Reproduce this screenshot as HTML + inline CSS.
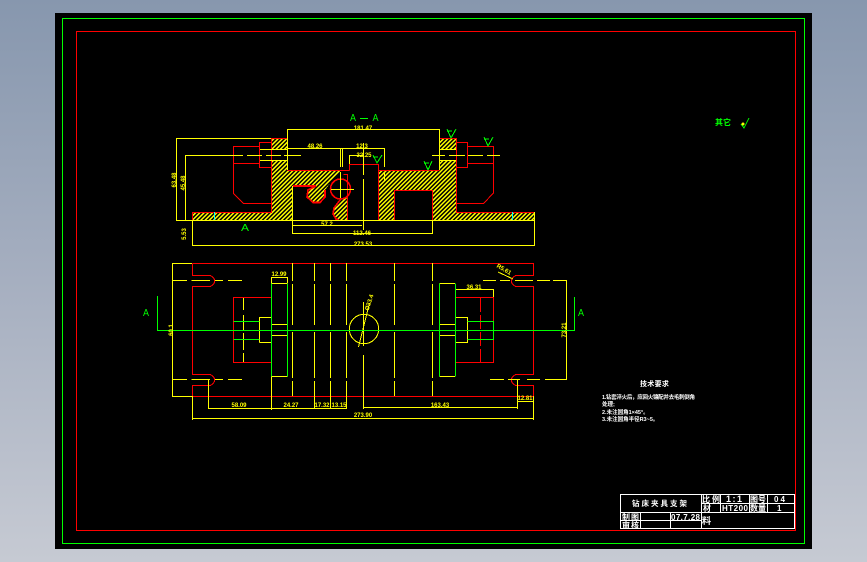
<!DOCTYPE html>
<html lang="zh">
<head>
<meta charset="utf-8">
<title>钻床夹具装配图</title>
<style>
html,body{margin:0;padding:0;width:867px;height:562px;overflow:hidden;background:linear-gradient(180deg,#8797ae 0%,#a6afc0 50%,#c6cad3 100%)}
svg{position:absolute;left:0;top:0;display:block}
text{font-family:"Liberation Sans","Noto Sans CJK SC",sans-serif}
.d{fill:#ff0;font-size:6px;font-weight:bold;text-anchor:middle}
.w{fill:#fff;font-size:7px;font-weight:bold}
.g{fill:#0f0;font-size:10px}
.c path,.c circle,.c rect,.c polygon{shape-rendering:crispEdges}
</style>
</head>
<body>
<svg width="867" height="562" viewBox="0 0 867 562" xmlns="http://www.w3.org/2000/svg">
<defs>
<pattern id="h" width="3" height="3" patternUnits="userSpaceOnUse" patternTransform="rotate(-45)">
<rect width="3" height="3" fill="#000"/><rect width="3" height="1.5" fill="#ff0"/>
</pattern>
</defs>
<rect x="55" y="13" width="757" height="536" fill="#000"/>
<g class="c">
<rect x="62.5" y="18.5" width="742" height="525" fill="none" stroke="#0f0"/>
<rect x="76.5" y="31.5" width="719" height="499" fill="none" stroke="#f00"/>

<!-- section view hatching -->
<g fill="url(#h)">
<polygon points="271,138 287,138 287,149 271,149"/>
<polygon points="271,160 287,160 287,170 342,170 331,182 325,190 325,197 320,202 313,202 307,197 308,190 316,186 292.5,186 292.5,220 192,220 192,212.5 271,212.5"/>
<polygon points="347,197 341,199 334,208 333,214 336,219 338,220 347,220"/>
<polygon points="378,170 439,170 439,160 456,160 456,212 534,212 534,220 432,220 432,190 394,190 394,220 378,220"/>
<polygon points="439,138 456,138 456,149 439,149"/>
</g>

<!-- section view red -->
<g fill="none" stroke="#f00" stroke-width="1">
<path d="M192.5,220V212.5H271.5V138.5H287.5M271.5,142.5H259.5V167.5H271.5M259.5,146.5H233.5V193.5L243.5,203.5H271.5M233.5,163.5H259.5"/>
<path d="M439.5,138.5H456.5V212.5H534.5V220M456.5,142.5H467.5V167.5H456.5M467.5,146.5H493.5V193L483.5,203.5H456.5M467.5,163.5H493.5"/>
<path d="M287.5,170.5H343.5M343,170.5H349.5M343.5,174.5H347.5V220M349.5,170.5V164.5H378.5V220M378.5,170.5H439.5M394.5,220V190.5H432.5V220"/>
</g>
<g fill="none" stroke="#f00" stroke-width="1.6">
<circle cx="340.5" cy="189" r="10"/>
<path d="M293,186H316L308,190L307,197L313,202.5H320L325,197V190"/>
<path d="M340,200L334,208L333,214L336,219L339,220"/>
</g>
<g stroke="#0ff"><path d="M214.5,212V220M512.5,212V220"/></g>

<!-- section view yellow -->
<g fill="none" stroke="#ff0" stroke-width="1">
<path d="M176,138.5H271M176.5,138V221M176,220.5H534M185.5,155V221M185,155.5H243M247,155.5H262M266,155.5H281M284,155.5H301"/>
<path d="M260,149.5H287.5M260,160.5H287.5M439,149.5H456M439,160.5H456"/>
<path d="M432,155.5H445M449,155.5H465M468,155.5H483M487,155.5H500"/>
<path d="M192.5,220V245.5H534.5V212M292.5,186V233.5H432.5V220M293,225.5H362"/>
<path d="M287.5,129V170M287,129.5H439.5V170M287,148.5H384.5V167M384.5,172V181M349.5,164V155.5H363"/>
<path d="M340.5,148V167M340.5,172V198M342.5,148V167M363.5,143V175M363.5,179V230M331,189.5H354"/>
</g>

<!-- plan view -->
<g fill="none" stroke="#f00" stroke-width="1">
<path d="M192.5,263.5H533.5V275.5H515.5Q507,281 515.5,286.5H533.5V374.5H515.5Q507,380 515.5,385.5H533.5V396.5H192.5V385.5H210.5Q219,380 210.5,374.5H192.5V286.5H210.5Q219,281 210.5,275.5H192.5V263.5"/>
<path d="M233.5,321V297.5H271.5M233.5,339V362.5H271.5M233.5,321V339"/>
<path d="M455.5,297.5H493.5V362.5H455.5"/>
<path d="M480.5,298V362" stroke-dasharray="14 3"/>
</g>
<g fill="none" stroke="#ff0" stroke-width="1">
<path d="M172,263.5H192M172.5,263V397M172,396.5H192"/>
<path d="M172.5,280.5H187M191.5,280.5H210M215,280.5H223M228,280.5H242"/>
<path d="M172.5,379.5H187M191.5,379.5H210M215,379.5H223M228,379.5H242"/>
<path d="M483,280.5H496M500,280.5H510M515,280.5H533M537,280.5H550M553,280.5H566.5V379.5H545M540,379.5H527M520,379.5H508M490,379.5H504"/>
<path d="M243.5,298V310M243.5,315V330M243.5,333V350M243.5,353V362"/>
<path d="M259.5,342.5V317.5H271.5M259.5,342.5H271.5M271,283.5H287.5M271,376.5H287.5M271,324.5H287.5M271,335.5H287.5"/>
<path d="M455,283.5H439.5M455,376.5H439.5M439,324.5H455.5M439,335.5H455.5M455,317.5H467.5V342.5H455"/>
<path d="M271.5,283V277.5H287.5V283M455.5,297V289.5H493.5V297"/>
<path d="M292.5,263V396M314.5,263V396M330.5,263V396M346.5,263V396M394.5,263V396M432.5,263V396" stroke-dasharray="18 3 41 7 46 3 15"/>
<path d="M271.5,376V410M208.5,380V409M208,408.5H346.5M314.5,396V409M330.5,396V409M346.5,396V409"/>
<path d="M363.5,302V346M363.5,355V409M363,407.5H517.5M517.5,379V409M517,401.5H533.5M533.5,396V420M192.5,396V420M192,418.5H533.5"/>
<circle cx="364" cy="329" r="14.7"/>
<path d="M358.5,347L369.5,303M513,279L498,272"/>
</g>
<g fill="none" stroke="#0f0" stroke-width="1">
<path d="M157.5,296V330.5H574.5V297"/>
<path d="M233.5,321.5H259.5M233.5,339.5H259.5M271.5,283.5V376.5M287.5,283.5V376.5"/>
<path d="M439.5,283.5V376.5M455.5,283.5V376.5M467.5,321.5H493.5V339.5H467.5"/>
</g>
</g>

<!-- dimension text -->
<g class="d">
<text x="363" y="130">181.47</text>
<text x="315" y="148">48.26</text>
<text x="362" y="148">12.3</text>
<text x="364" y="157">32.25</text>
<text x="327" y="226">57.2</text>
<text x="362" y="235">112.46</text>
<text x="363" y="246">273.53</text>
<text x="279" y="276">12.99</text>
<text x="474" y="289">36.31</text>
<text x="239" y="407">58.09</text>
<text x="291" y="407">24.27</text>
<text x="322" y="407">17.32</text>
<text x="339" y="407">13.15</text>
<text x="440" y="407">163.43</text>
<text x="525" y="400">12.81</text>
<text x="363" y="417">273.90</text>
<text transform="translate(176,180) rotate(-90)">63.48</text>
<text transform="translate(185,183) rotate(-90)">45.48</text>
<text transform="translate(186,234) rotate(-90)">5.53</text>
<text transform="translate(173,330) rotate(-90)">60.1</text>
<text transform="translate(566,330) rotate(-90)">73.21</text>
<text transform="translate(503,271) rotate(30)">R5.61</text>
<text transform="translate(371,303) rotate(-72)">Ø23.4</text>
</g>

<!-- green labels -->
<g class="g" text-anchor="middle">
<text x="353" y="121" textLength="6" lengthAdjust="spacingAndGlyphs">A</text>
<text x="375.5" y="121" textLength="6" lengthAdjust="spacingAndGlyphs">A</text>
<text x="245" y="231" textLength="8" lengthAdjust="spacingAndGlyphs">A</text>
<text x="146" y="316" textLength="6" lengthAdjust="spacingAndGlyphs">A</text>
<text x="581" y="316" textLength="6" lengthAdjust="spacingAndGlyphs">A</text>
</g>
<path d="M360,118.5H368" stroke="#0f0" shape-rendering="crispEdges"/>
<text x="715" y="125" fill="#0f0" font-size="8" font-weight="bold">其它</text>
<g fill="none" stroke="#0f0" stroke-width="1" shape-rendering="crispEdges">
<path d="M447,129L451,138L456,129M447,131H452"/>
<path d="M484,137L488,146L493,137M484,139H489"/>
<path d="M424,161L428,170L432,161M424,163H429"/>
<path d="M373,155L377,163L382,155M373,157H378"/>
<path d="M741,124L744,128L749,118"/>
</g>
<circle cx="743" cy="124" r="1.5" fill="#ff0"/>

<!-- technical notes -->
<text class="w" x="640" y="386" letter-spacing=".3">技术要求</text>
<g class="w" style="font-size:5.5px">
<text x="602" y="399" textLength="93">1.钻套淬火后，应回火镶配并去毛刺倒角</text>
<text x="602" y="406">处理;</text>
<text x="602" y="414">2.未注圆角1×45°。</text>
<text x="602" y="421">3.未注圆角半径R3~5。</text>
</g>

<!-- title block -->
<g fill="none" stroke="#fff" stroke-width="1" shape-rendering="crispEdges">
<rect x="620.5" y="494.5" width="174" height="34"/>
<path d="M620,512.5H795M701,503.5H795M620,520.5H701M701.5,494V529M640.5,512V529M670.5,512V529M720.5,494V512M749.5,494V512M767.5,494V512"/>
</g>
<g class="w">
<text x="632" y="506" style="font-size:7.5px" textLength="55">钻床夹具支架</text>
<text x="702" y="502" style="font-size:8px" textLength="18">比例</text>
<text x="726" y="502" style="font-size:9px" textLength="16">1:1</text>
<text x="750" y="502" style="font-size:8px" textLength="16">图号</text>
<text x="774" y="502" style="font-size:8px" textLength="11">04</text>
<text x="703" y="511" style="font-size:8px">材</text>
<text x="722" y="511" style="font-size:8px" textLength="26">HT200</text>
<text x="750" y="511" style="font-size:8px" textLength="16">数量</text>
<text x="777" y="511" style="font-size:8px">1</text>
<text x="622" y="520" style="font-size:8px" textLength="17">制图</text>
<text x="622" y="528" style="font-size:8px" textLength="17">审核</text>
<text x="671" y="520" style="font-size:8px" textLength="29">07.7.28</text>
<text x="702" y="524" style="font-size:9px">料</text>
</g>
</svg>
</body>
</html>
